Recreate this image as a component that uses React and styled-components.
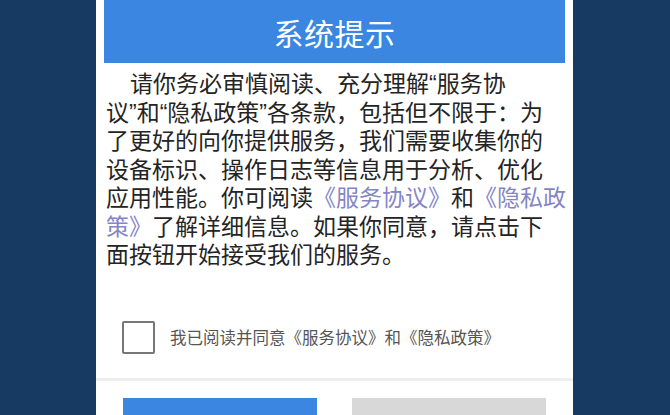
import styled, { createGlobalStyle } from "styled-components"

const GlobalStyle = createGlobalStyle`
  html, body {
    margin: 0;
    padding: 0;
    background: #173a63;
  }
  body {
    font-family: "Liberation Sans", "Noto Sans CJK SC", sans-serif;
  }
`

const Page = styled.div`
  height: 415px;
  overflow: hidden;
  padding-left: 96px;
  background: #173a63;
`

const Dialog = styled.div`
  width: 477px;
  background: #fff;
`

const Header = styled.div`
  margin: 0 8px 0 8px;
  height: 63px;
  background: #3a86e0;
  display: flex;
  align-items: center;
  justify-content: center;
  color: #fff;
  font-family: "Noto Sans CJK SC", sans-serif;
  font-size: 30px;
  letter-spacing: 0.5px;
`

const Body = styled.div`
  padding: 7px 10px 0 10px;
  color: #242424;
  font-size: 23px;
  line-height: 28.5px;
`

const Line = styled.div`
  white-space: nowrap;
  text-indent: ${(p) => (p.$first ? "24px" : "0")};
`

const Link = styled.span`
  color: #8585c6;
`

const AgreeRow = styled.label`
  display: flex;
  align-items: center;
  gap: 15px;
  padding: 51px 26px 24px 26px;
  cursor: pointer;
`

const Box = styled.span`
  width: 33px;
  height: 33px;
  box-sizing: border-box;
  border: 2px solid #777;
  border-radius: 2px;
  background: #fff;
`

const AgreeText = styled.span`
  font-family: "Noto Sans CJK SC", sans-serif;
  font-size: 16.5px;
  color: #555;
`

const Footer = styled.div`
  border-top: 3px solid #eeeeee;
  padding: 17px 27px 20px 27px;
  display: flex;
  justify-content: space-between;
`

const Button = styled.button`
  width: 194px;
  height: 50px;
  border: none;
  border-radius: 0;
  background: ${(p) => (p.$primary ? "#3a86e0" : "#d8d8d8")};
`

export default function App() {
  return (
    <Page>
      <GlobalStyle />
      <Dialog>
        <Header>系统提示</Header>
        <Body>
          <Line $first>请你务必审慎阅读、充分理解“服务协</Line>
          <Line>议”和“隐私政策”各条款，包括但不限于：为</Line>
          <Line>了更好的向你提供服务，我们需要收集你的</Line>
          <Line>设备标识、操作日志等信息用于分析、优化</Line>
          <Line>
            应用性能。你可阅读<Link>《服务协议》</Link>和<Link>《隐私政</Link>
          </Line>
          <Line>
            <Link>策》</Link>了解详细信息。如果你同意，请点击下
          </Line>
          <Line>面按钮开始接受我们的服务。</Line>
        </Body>
        <AgreeRow>
          <Box />
          <AgreeText>我已阅读并同意《服务协议》和《隐私政策》</AgreeText>
        </AgreeRow>
        <Footer>
          <Button $primary aria-label="同意" />
          <Button aria-label="不同意" />
        </Footer>
      </Dialog>
    </Page>
  )
}
